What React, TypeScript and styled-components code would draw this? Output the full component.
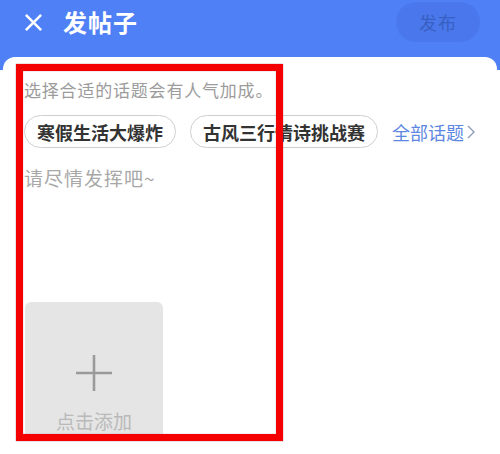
import React from "react";
import styled, { createGlobalStyle } from "styled-components";

const blue = "#4f80f6";

const topics = ["寒假生活大爆炸", "古风三行情诗挑战赛"];

const GlobalStyle = createGlobalStyle`
  html, body {
    margin: 0;
    padding: 0;
    background: #fff;
  }

  body {
    font-family: "Noto Sans CJK SC", "Noto Sans", sans-serif;
  }
`;

const App = () => {
  return (
    <>
      <GlobalStyle />
      <Screen>
        <Header>
          <TitleGroup>
            <CloseIcon viewBox="0 0 20 20">
              <line x1="2" y1="2" x2="18" y2="18" />
              <line x1="18" y1="2" x2="2" y2="18" />
            </CloseIcon>
            <Title>发帖子</Title>
          </TitleGroup>
          <PublishButton disabled>发布</PublishButton>
        </Header>
        <Card>
          <Hint>选择合适的话题会有人气加成。</Hint>
          <TopicRow>
            {topics.map((topic) => (
              <TopicChip key={topic}>{topic}</TopicChip>
            ))}
            <AllTopics>
              全部话题
              <Chevron viewBox="0 0 8 16">
                <polyline points="1,2 7,8 1,14" />
              </Chevron>
            </AllTopics>
          </TopicRow>
          <Editor>请尽情发挥吧~</Editor>
          <AddBox>
            <PlusIcon viewBox="0 0 36 36">
              <line x1="18" y1="0" x2="18" y2="36" />
              <line x1="0" y1="18" x2="36" y2="18" />
            </PlusIcon>
            <AddLabel>点击添加</AddLabel>
          </AddBox>
        </Card>
        <Highlight />
      </Screen>
    </>
  );
};

const Screen = styled.div`
  position: relative;
  width: 500px;
  height: 454px;
  overflow: hidden;
  display: flex;
  flex-direction: column;
  background: linear-gradient(to bottom, ${blue} 70px, #fff 70px);
`;

const Header = styled.header`
  display: flex;
  align-items: center;
  justify-content: space-between;
  height: 44px;
  padding: 0 20px 13px 24px;
`;

const TitleGroup = styled.div`
  display: flex;
  align-items: center;
  gap: 20px;
`;

const CloseIcon = styled.svg`
  width: 19px;
  height: 19px;
  stroke: #fff;
  stroke-width: 2.6;
  fill: none;
`;

const Title = styled.h1`
  margin: 0;
  color: #fff;
  font-size: 24px;
  font-weight: 700;
  line-height: 32px;
  letter-spacing: 1px;
`;

const PublishButton = styled.button`
  width: 84px;
  height: 40px;
  border: none;
  border-radius: 20px;
  background: #4a78ec;
  color: #3860c2;
  font-family: "Noto Sans CJK SC", sans-serif;
  font-size: 18px;
  letter-spacing: 1px;
  padding: 0;
`;

const Card = styled.main`
  flex: 1;
  margin: 0 3px;
  padding: 21px 20px 0 21px;
  background: #fff;
  border-radius: 12px 12px 0 0;
`;

const Hint = styled.p`
  margin: 0;
  color: #9c9c9c;
  font-size: 17px;
  line-height: 24px;
  letter-spacing: 0.8px;
`;

const TopicRow = styled.div`
  display: flex;
  align-items: center;
  gap: 14px;
  margin-top: 13px;
`;

const TopicChip = styled.span`
  display: inline-flex;
  align-items: center;
  height: 33px;
  box-sizing: border-box;
  padding: 0 12px;
  border: 1px solid #cfcfcf;
  border-radius: 17px;
  color: #333;
  font-size: 18px;
  font-weight: 700;
`;

const AllTopics = styled.span`
  display: inline-flex;
  align-items: center;
  gap: 3px;
  color: #5c87e2;
  font-size: 18px;
`;

const Chevron = styled.svg`
  width: 8px;
  height: 16px;
  stroke: #8f9db8;
  stroke-width: 1.4;
  fill: none;
`;

const Editor = styled.div`
  min-height: 136px;
  margin-top: 18px;
  color: #a8a8a8;
  font-size: 19px;
  line-height: 24px;
  letter-spacing: 1px;
`;

const AddBox = styled.div`
  width: 138px;
  height: 138px;
  margin-left: 1px;
  display: flex;
  flex-direction: column;
  align-items: center;
  padding-top: 53px;
  box-sizing: border-box;
  background: #e5e5e5;
  border-radius: 6px;
`;

const PlusIcon = styled.svg`
  width: 36px;
  height: 36px;
  stroke: #9a9a9a;
  stroke-width: 2.6;
`;

const AddLabel = styled.span`
  margin-top: 18px;
  color: #b9b9b9;
  font-size: 19px;
  line-height: 24px;
`;

const Highlight = styled.div`
  position: absolute;
  left: 16px;
  top: 64px;
  width: 267px;
  height: 377px;
  box-sizing: border-box;
  border: 7px solid #f40000;
  box-shadow: 0 0 1px rgba(90, 0, 0, 0.7), inset 0 0 1px rgba(90, 0, 0, 0.7);
  pointer-events: none;
`;

export default App;
